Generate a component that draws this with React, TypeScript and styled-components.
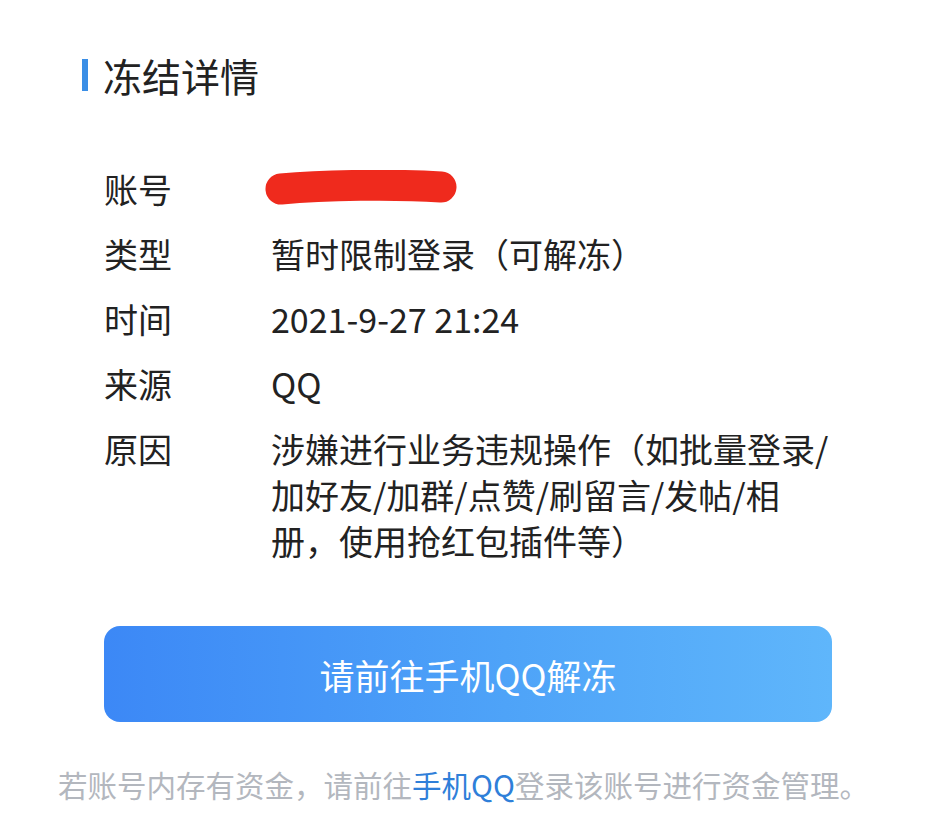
import styled, { createGlobalStyle } from "styled-components";

const GlobalStyle = createGlobalStyle`
  body {
    margin: 0;
    background: #fff;
    font-family: "Noto Sans CJK SC", "Noto Sans", sans-serif;
    color: #1f1f1f;
  }
`;

// レイアウト
const SPage = styled.div`
  width: 927px;
  height: 825px;
  padding-top: 50px;
  box-sizing: border-box;
`;

const STitle = styled.h1`
  display: flex;
  align-items: center;
  margin: 0 0 66px 82px;
  height: 50px;
  font-size: 39px;
  font-weight: 400;
  line-height: 50px;
  color: #222;
  &::before {
    content: "";
    width: 6px;
    height: 32px;
    margin-right: 15px;
    background: #3a8ee6;
  }
`;

const SList = styled.div`
  display: flex;
  flex-direction: column;
  gap: 19px;
  padding: 0 88px 0 104px;
`;

const SRow = styled.div`
  display: grid;
  grid-template-columns: 167px 1fr;
  font-size: 34px;
  line-height: 46px;
  color: #222;
`;

const SLabel = styled.div``;
const SValue = styled.div``;

const SMask = styled.svg`
  display: block;
  margin: 4px 0 0 -6px;
`;

const SButton = styled.button`
  display: flex;
  align-items: center;
  justify-content: center;
  width: 728px;
  height: 96px;
  margin: 62px 0 0 104px;
  border: none;
  border-radius: 16px;
  background: linear-gradient(90deg, #3c88f6 0%, #4ea3f8 55%, #5fb6fb 100%);
  color: #fff;
  font-family: inherit;
  font-size: 35px;
`;

const SNote = styled.p`
  margin: 42px 0 0;
  text-align: center;
  font-size: 29.5px;
  line-height: 40px;
  color: #b3b7be;
`;

const SLink = styled.span`
  color: #2f7fd9;
`;

const rows = [
  { label: "类型", value: "暂时限制登录（可解冻）" },
  { label: "时间", value: "2021-9-27 21:24" },
  { label: "来源", value: "QQ" },
  {
    label: "原因",
    value:
      "涉嫌进行业务违规操作（如批量登录/加好友/加群/点赞/刷留言/发帖/相册，使用抢红包插件等）",
  },
];

export default function App() {
  return (
    <>
      <GlobalStyle />
      <SPage>
        <STitle>冻结详情</STitle>
        <SList>
          <SRow>
            <SLabel>账号</SLabel>
            <SValue>
              <SMask width="192" height="38" viewBox="0 0 192 38">
                <path
                  d="M16 19 C60 15 130 14 176 17"
                  stroke="#ef2a1d"
                  strokeWidth="31"
                  strokeLinecap="round"
                  fill="none"
                />
              </SMask>
            </SValue>
          </SRow>
          {rows.map((r) => (
            <SRow key={r.label}>
              <SLabel>{r.label}</SLabel>
              <SValue>{r.value}</SValue>
            </SRow>
          ))}
        </SList>
        <SButton>请前往手机QQ解冻</SButton>
        <SNote>
          若账号内存有资金，请前往<SLink>手机QQ</SLink>登录该账号进行资金管理。
        </SNote>
      </SPage>
    </>
  );
}
